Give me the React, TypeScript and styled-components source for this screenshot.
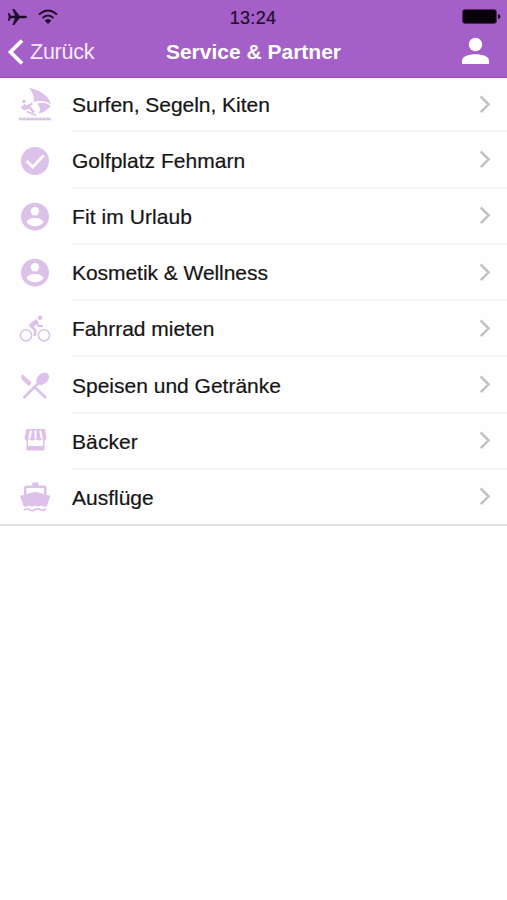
import React from "react";
import styled, { createGlobalStyle } from "styled-components";

const GlobalStyle = createGlobalStyle`
  * { box-sizing: border-box; }
  body { margin: 0; background: #fff; font-family: "Liberation Sans", Arial, sans-serif; }
`;
const Screen = styled.div`
  width: 507px;
  height: 900px;
  overflow: hidden;
  background: #fefefe;
`;
const Header = styled.header`
  height: 78px;
  background: #a55fc9;
  border-bottom: 1px solid #9550b8;
`;
const StatusBar = styled.div`
  display: grid;
  grid-template-columns: 1fr auto 1fr;
  align-items: center;
  height: 33px;
  padding: 0 6px 0 7px;
  color: #1f0d29;
`;
const StatusIcons = styled.div`
  display: flex;
  align-items: center;
  gap: 10px;
`;
const Clock = styled.time`
  margin-right: 2px;
  font-size: 18px;
  line-height: 20px;
  letter-spacing: 0.3px;
  padding-top: 2px;
  -webkit-text-stroke: 0.2px #1f0d29;
`;
const BatterySvg = styled.svg`
  justify-self: end;
`;
const NavBar = styled.nav`
  display: grid;
  grid-template-columns: 1fr auto 1fr;
  align-items: center;
  height: 38px;
  padding: 0 17px;
  color: #fff;
`;
const BackButton = styled.button`
  display: flex;
  align-items: center;
  gap: 6px;
  margin-left: -10px;
  padding: 0;
  border: 0;
  background: none;
  color: #f8e9ff;
  font: 21.5px/26px "Liberation Sans", Arial, sans-serif;
  letter-spacing: -0.25px;
`;
const Title = styled.h1`
  margin: 0;
  font-size: 21px;
  line-height: 26px;
  font-weight: 700;
`;
const ProfileSvg = styled.svg`
  justify-self: end;
  margin-top: -2px;
`;
const List = styled.ul`
  margin: 0;
  padding: 0;
  list-style: none;
  border-bottom: 2px solid #dedede;
`;
const Row = styled.li`
  display: flex;
  align-items: stretch;
  height: 56.25px;
  padding-left: 17px;
  &:first-child { height: 54.4px; }
  &:last-child { height: 54px; }
`;
const IconCell = styled.div`
  display: flex;
  align-items: center;
  width: 55px;
  color: #dcc1e9;
`;
const RowBody = styled.div<{ $last: boolean }>`
  flex: 1;
  display: flex;
  align-items: center;
  justify-content: space-between;
  padding: 1px 15px 0 0;
  border-bottom: ${(p) => (p.$last ? "0" : "2px solid #f4f4f4")};
`;
const Label = styled.span<{ $spacing: number }>`
  padding-top: 1px;
  font-size: 21px;
  line-height: 26px;
  color: #151515;
  letter-spacing: ${(p) => p.$spacing}px;
  -webkit-text-stroke: 0.2px #151515;
`;

const Glyph = ({ children }: { children: React.ReactNode }) => (
  <svg width="36" height="36" viewBox="0 0 36 36" fill="currentColor">{children}</svg>
);

const Surfer = () => (
  <Glyph>
    <path d="M12 1C23 2.500 32 9 34 17.500C29 13.500 23 13.200 16.500 15.200C18 11 16 6 12 1Z" />
    <path d="M20 16.800C25 14.800 30 15.800 33.600 19C31 22.500 27 25.500 21.500 26.500C24 23 23 19.500 20 16.800Z" />
    <circle cx="7" cy="14.500" r="1.700" />
    <path d="M4.500 19.500L7.500 22L13 20.500L17 25.500M6.500 17.500L9 20L15.500 16.500" fill="none" stroke="currentColor" strokeWidth="2.300" strokeLinejoin="round" />
    <path d="M10 24.500L19 28.500" stroke="currentColor" strokeWidth="1.900" />
    <path d="M2 32.300H34" stroke="currentColor" strokeWidth="2" />
    <path d="M2 31.500H34" stroke="currentColor" strokeWidth="1.800" strokeDasharray="2.500 1.500" />
  </Glyph>
);
const CheckCircle = () => (
  <Glyph>
    <circle cx="18" cy="18" r="14" />
    <path d="M9.700 18L15.700 24L26.700 12.400" fill="none" stroke="#fff" strokeWidth="2.800" />
  </Glyph>
);
const Account = () => (
  <Glyph>
    <circle cx="18" cy="17.700" r="14" />
    <circle cx="18" cy="12.200" r="4.200" fill="#fff" />
    <path d="M9.600 23.300C10.500 17.500 25.500 17.500 26.400 23.300C22.500 28.700 13.500 28.700 9.600 23.300Z" fill="#fff" />
  </Glyph>
);
const Cyclist = () => (
  <Glyph>
    <g fill="none" stroke="currentColor">
      <circle cx="9" cy="24.300" r="5.600" strokeWidth="1.500" />
      <circle cx="27" cy="24.300" r="5.600" strokeWidth="1.500" />
      <path d="M19 11L14 15L18.500 19.500L17.500 25" strokeWidth="2.500" strokeLinejoin="round" />
      <path d="M19.500 11L21.500 15H26" strokeWidth="1.900" />
    </g>
    <path d="M19.500 8L13 12.500L12 15.500L16 17L21.500 11Z" />
    <circle cx="23" cy="6.800" r="2.200" />
  </Glyph>
);
const Cutlery = () => (
  <Glyph>
    <path d="M5 6L14.500 14.500L12 18L5.800 12.500C4.200 11 4 8 5 6Z" />
    <ellipse cx="25.700" cy="10.800" rx="7.200" ry="5.200" transform="rotate(-43 25.7 10.800)" />
    <path d="M22 14.500L6.500 30M17.500 19L29 30" stroke="currentColor" strokeWidth="2.500" />
  </Glyph>
);
const Shop = () => (
  <Glyph>
    <path d="M9.500 5H27.800L29.700 14.500Q27.500 18 25 15Q22 18 18.500 15Q15.500 18 12.300 15Q9.500 18 7.300 14.500Z" />
    <path d="M14 6.500L12.400 14.500M18.500 6.500V14.500M23.200 6.500L24.700 14.500" stroke="#fff" strokeWidth="2" />
    <path d="M9.500 16H11V22H26V16H27.500V26.500H9.500Z" />
  </Glyph>
);
const Boat = () => (
  <Glyph>
    <path fillRule="evenodd" d="M15.300 3.500H21.400V6.500H27Q29.500 6.500 29.500 9V15.800L33.300 17L30 27Q27 28.500 24 26.500Q21 28.500 18 26.500Q15 28.500 12 26.500Q9 28.500 6.500 27L3 17L7 15.800V9Q7 6.500 9.500 6.500H15.300ZM9.500 9V15L18.200 12.800L27 15V9Z" />
    <path d="M7 31Q10 29 13 31Q15.500 32.500 18 30.500Q21 29 24 31Q26.500 32 29 30" fill="none" stroke="currentColor" strokeWidth="1.700" />
  </Glyph>
);
const Chevron = () => (
  <svg width="14" height="20" viewBox="0 0 14 20" fill="none" stroke="#c2c2c4" strokeWidth="2.500">
    <path d="M2.700 1.500L10.600 9.300L2.700 17.100" />
  </svg>
);

const items = [
  { label: "Surfen, Segeln, Kiten", Icon: Surfer, spacing: -0.03 },
  { label: "Golfplatz Fehmarn", Icon: CheckCircle, spacing: 0.03 },
  { label: "Fit im Urlaub", Icon: Account, spacing: 0.07 },
  { label: "Kosmetik & Wellness", Icon: Account, spacing: -0.05 },
  { label: "Fahrrad mieten", Icon: Cyclist, spacing: 0 },
  { label: "Speisen und Getränke", Icon: Cutlery, spacing: 0 },
  { label: "Bäcker", Icon: Shop, spacing: 0.1 },
  { label: "Ausflüge", Icon: Boat, spacing: 0 },
];

export default function App() {
  return (
    <Screen>
      <GlobalStyle />
      <Header>
        <StatusBar>
          <StatusIcons>
            <svg width="21" height="18" viewBox="0 0 21 18" fill="currentColor">
              <path d="M20 9Q20 7.700 18 7.700H12.500L7.300 1H5.300L8 7.700H4L2 5H.8L1.700 9L.8 13H2L4 10.300H8L5.300 17H7.300L12.500 10.300H18Q20 10.300 20 9Z" />
            </svg>
            <svg width="20" height="16" viewBox="0 0 20 16" fill="none" stroke="currentColor" strokeWidth="2">
              <path d="M1 5.500Q10-2.500 19 5.500M4.500 9Q10 4 15.500 9" />
              <path d="M6.700 11.500Q10 8.500 13.300 11.500L10 15Z" fill="currentColor" stroke="none" />
            </svg>
          </StatusIcons>
          <Clock>13:24</Clock>
          <BatterySvg width="39" height="15" viewBox="0 0 39 15">
            <rect x=".7" y=".7" width="33.600" height="13.600" rx="2" fill="#08030b" stroke="#40204f" strokeWidth="1" />
            <path d="M36 5Q38.500 5.500 38.500 7.500T36 10Z" fill="#1f0d29" />
          </BatterySvg>
        </StatusBar>
        <NavBar>
          <BackButton>
            <svg width="17" height="28" viewBox="0 0 17 28" fill="none" stroke="#fff" strokeWidth="3.800">
              <path d="M15 2.500L3.500 14L15 25.500" />
            </svg>
            Zurück
          </BackButton>
          <Title>Service &amp; Partner</Title>
          <ProfileSvg width="29" height="28" viewBox="0 0 29 28" fill="#fff">
            <circle cx="14.500" cy="7.500" r="6.700" />
            <path d="M1 27V23.500C1 15 28 15 28 23.500V27Z" />
          </ProfileSvg>
        </NavBar>
      </Header>
      <List>
        {items.map(({ label, Icon, spacing }, i) => (
          <Row key={label}>
            <IconCell><Icon /></IconCell>
            <RowBody $last={i === items.length - 1}>
              <Label $spacing={spacing}>{label}</Label>
              <Chevron />
            </RowBody>
          </Row>
        ))}
      </List>
    </Screen>
  );
}
